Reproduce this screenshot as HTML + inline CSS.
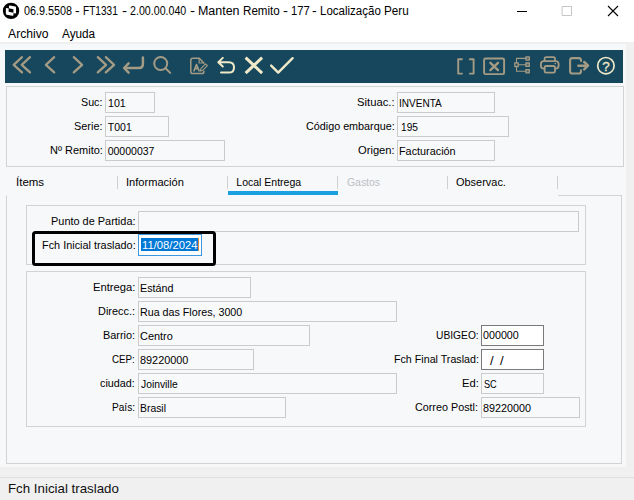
<!DOCTYPE html>
<html lang="es">
<head>
<meta charset="utf-8">
<title>Manten Remito</title>
<style>
html,body{margin:0;padding:0;}
body{width:634px;height:500px;overflow:hidden;position:relative;background:#f7f8fa;font-family:"Liberation Sans",sans-serif;color:#000;}
.abs{position:absolute;box-sizing:border-box;}
.t{position:absolute;white-space:pre;transform-origin:0 0;line-height:20px;height:20px;font-size:10.5px;font-family:"Liberation Sans",sans-serif;}
.f{position:absolute;box-sizing:border-box;border:1px solid #cbcbcb;background:#f8f9fb;height:21px;}
.f.ed{border-color:#7a7a7a;background:#fff;}
.g{position:absolute;box-sizing:border-box;border:1px solid #d2d2d2;}
.sep{position:absolute;width:1px;top:176px;height:13px;background:#d0d0d0;}
</style>
</head>
<body>
<!-- window chrome -->
<div class="abs" style="left:0;top:0;width:634px;height:42px;background:#fff;"></div>
<div class="abs" style="left:0;top:42px;width:634px;height:2px;background:#efefef;"></div>
<div class="abs" style="left:626px;top:42px;width:8px;height:458px;background:#f0f0f0;"></div>
<div class="abs" style="left:0;top:467px;width:634px;height:33px;background:#f0f0f0;"></div>
<div class="abs" style="left:0;top:477px;width:634px;height:1px;background:#dfdfdf;"></div>
<!-- toolbar -->
<div class="abs" style="left:5px;top:50px;width:618px;height:33px;background:#17475c;"></div>
<!-- header panel -->
<div class="g" style="left:6px;top:86px;width:618px;height:81px;"></div>
<div class="f" style="left:105px;top:92px;width:50px;"></div>
<div class="f" style="left:105px;top:116px;width:64px;"></div>
<div class="f" style="left:105px;top:140px;width:120px;"></div>
<div class="f" style="left:397px;top:92px;width:98px;"></div>
<div class="f" style="left:397px;top:116px;width:112px;"></div>
<div class="f" style="left:397px;top:140px;width:98px;"></div>
<!-- tabs -->
<div class="sep" style="left:117px;"></div>
<div class="sep" style="left:227px;"></div>
<div class="sep" style="left:337px;"></div>
<div class="sep" style="left:447px;"></div>
<div class="sep" style="left:557px;"></div>
<div class="abs" style="left:228px;top:191px;width:110px;height:4px;background:#1a9fe0;"></div>
<!-- tab body -->
<div class="abs" style="left:6px;top:195px;width:616px;height:269px;border:1px solid #d2d2d2;border-top-color:transparent;"></div>
<div class="abs" style="left:558px;top:195px;width:64px;height:1px;background:#d2d2d2;"></div>
<div class="g" style="left:26px;top:205px;width:560px;height:60px;"></div>
<div class="g" style="left:26px;top:271px;width:560px;height:156px;"></div>
<div class="f" style="left:138px;top:211px;width:441px;"></div>
<!-- date field (focused) -->
<div class="f" style="left:138px;top:234px;width:64px;height:22px;border-color:#3c96e0;background:#fff;"></div>
<div class="abs" style="left:141px;top:238px;width:57px;height:13px;background:#0078d7;"></div>
<div class="abs" style="left:197.5px;top:238px;width:1px;height:13px;background:#e08a3c;"></div>
<!-- lower fields -->
<div class="f" style="left:138px;top:277px;width:113px;"></div>
<div class="f" style="left:138px;top:301px;width:259px;"></div>
<div class="f" style="left:138px;top:325px;width:172px;"></div>
<div class="f" style="left:138px;top:349px;width:116px;"></div>
<div class="f" style="left:138px;top:373px;width:259px;"></div>
<div class="f" style="left:138px;top:397px;width:148px;"></div>
<div class="f ed" style="left:481px;top:325px;width:63px;"></div>
<div class="f ed" style="left:481px;top:349px;width:63px;"></div>
<div class="f" style="left:481px;top:373px;width:63px;"></div>
<div class="f" style="left:481px;top:397px;width:99px;"></div>
<!-- highlight rectangle -->
<div class="abs" style="left:31.6px;top:231.3px;width:184.1px;height:34.9px;border:3.9px solid #000;border-radius:3.5px;"></div>

<span class="t" style="left:23.95px;top:1px;font-size:12px;transform:scaleX(0.9010);">06.9.5508</span>
<span class="t" style="left:74.92px;top:1px;font-size:12px;transform:scaleX(1.1667);">-</span>
<span class="t" style="left:82.96px;top:1px;font-size:12px;transform:scaleX(0.8403);">FT1331</span>
<span class="t" style="left:122.17px;top:1px;font-size:12px;transform:scaleX(1.2667);">-</span>
<span class="t" style="left:130.16px;top:1px;font-size:12px;transform:scaleX(0.8880);">2.00.00.040</span>
<span class="t" style="left:190.37px;top:1px;font-size:12px;transform:scaleX(1.2667);">-</span>
<span class="t" style="left:198.26px;top:1px;font-size:12px;transform:scaleX(1.0379);">Manten</span>
<span class="t" style="left:242.73px;top:1px;font-size:12px;transform:scaleX(0.9671);">Remito</span>
<span class="t" style="left:283.18px;top:1px;font-size:12px;transform:scaleX(1.2333);">-</span>
<span class="t" style="left:291.06px;top:1px;font-size:12px;transform:scaleX(0.9351);">177</span>
<span class="t" style="left:311.92px;top:1px;font-size:12px;transform:scaleX(1.1667);">-</span>
<span class="t" style="left:319.84px;top:1px;font-size:12px;transform:scaleX(0.9597);">Localização</span>
<span class="t" style="left:384.13px;top:1px;font-size:12px;transform:scaleX(0.9745);">Peru</span>
<span class="t" style="left:7.60px;top:24px;font-size:12px;transform:scaleX(1.0152);">Archivo</span>
<span class="t" style="left:62.30px;top:24px;font-size:12px;transform:scaleX(0.9807);">Ayuda</span>
<span class="t" style="left:7.78px;top:479px;font-size:13px;transform:scaleX(1.0230);color:#111;">Fch Inicial traslado</span>
<span class="t" style="left:81.29px;top:92px;transform:scaleX(1.0205);">Suc:</span>
<span class="t" style="left:74.18px;top:116px;transform:scaleX(1.0385);">Serie:</span>
<span class="t" style="left:49.92px;top:140px;transform:scaleX(1.0462);">Nº Remito:</span>
<span class="t" style="left:357.06px;top:92px;transform:scaleX(1.0726);">Situac.:</span>
<span class="t" style="left:306.09px;top:116px;transform:scaleX(1.0259);">Código embarque:</span>
<span class="t" style="left:358.17px;top:140px;transform:scaleX(1.0636);">Origen:</span>
<span class="t" style="left:108.04px;top:93px;transform:scaleX(1.0154);">101</span>
<span class="t" style="left:107.85px;top:117px;">T001</span>
<span class="t" style="left:107.70px;top:141px;">00000037</span>
<span class="t" style="left:398.94px;top:93px;transform:scaleX(0.9554);">INVENTA</span>
<span class="t" style="left:400.58px;top:117px;transform:scaleX(0.9636);">195</span>
<span class="t" style="left:399.13px;top:141px;transform:scaleX(1.0318);">Facturación</span>
<span class="t" style="left:15.78px;top:172px;transform:scaleX(1.0939);">Ítems</span>
<span class="t" style="left:125.94px;top:172px;transform:scaleX(1.0554);">Información</span>
<span class="t" style="left:236.35px;top:172px;">Local Entrega</span>
<span class="t" style="left:346.60px;top:172px;transform:scaleX(0.9908);color:#bcc0c5;">Gastos</span>
<span class="t" style="left:456.28px;top:172px;transform:scaleX(1.0430);">Observac.</span>
<span class="t" style="left:51.02px;top:211px;transform:scaleX(1.0415);">Punto de Partida:</span>
<span class="t" style="left:41.92px;top:235px;transform:scaleX(1.0355);">Fch Inicial traslado:</span>
<span class="t" style="left:141.50px;top:235px;transform:scaleX(1.0719);color:#fff;">11/08/2024</span>
<span class="t" style="left:92.80px;top:277px;transform:scaleX(1.0684);">Entrega:</span>
<span class="t" style="left:140.03px;top:278px;transform:scaleX(1.0240);">Estánd</span>
<span class="t" style="left:98.02px;top:301px;transform:scaleX(1.0412);">Direcc.:</span>
<span class="t" style="left:140.04px;top:302px;transform:scaleX(1.0186);">Rua das Flores, 3000</span>
<span class="t" style="left:103.02px;top:325px;transform:scaleX(1.0393);">Barrio:</span>
<span class="t" style="left:140.28px;top:326px;transform:scaleX(1.0407);">Centro</span>
<span class="t" style="left:112.33px;top:349px;transform:scaleX(0.9304);">CEP:</span>
<span class="t" style="left:140.28px;top:350px;transform:scaleX(1.0361);">89220000</span>
<span class="t" style="left:100.29px;top:373px;transform:scaleX(1.0277);">ciudad:</span>
<span class="t" style="left:140.55px;top:374px;transform:scaleX(0.9823);">Joinville</span>
<span class="t" style="left:112.08px;top:397px;transform:scaleX(0.9618);">País:</span>
<span class="t" style="left:140.06px;top:398px;transform:scaleX(0.9899);">Brasil</span>
<span class="t" style="left:435.87px;top:325px;transform:scaleX(0.9762);">UBIGEO:</span>
<span class="t" style="left:393.64px;top:349px;transform:scaleX(1.0177);">Fch Final Traslad:</span>
<span class="t" style="left:461.80px;top:373px;transform:scaleX(1.0714);">Ed:</span>
<span class="t" style="left:415.49px;top:397px;transform:scaleX(1.0267);">Correo Postl:</span>
<span class="t" style="left:483.49px;top:325px;transform:scaleX(1.0219);">000000</span>
<span class="t" style="left:490.00px;top:351px;font-size:13px;">/</span>
<span class="t" style="left:500.00px;top:351px;font-size:13px;">/</span>
<span class="t" style="left:483.56px;top:374px;transform:scaleX(0.8727);">SC</span>
<span class="t" style="left:483.49px;top:398px;transform:scaleX(1.0273);">89220000</span>

<!-- icons -->
<svg class="abs" style="left:0;top:0;" width="634" height="500" viewBox="0 0 634 500" fill="none" stroke-linecap="round" stroke-linejoin="round">
  <!-- app logo -->
  <g stroke="none">
    <circle cx="11.05" cy="10.9" r="8.2" fill="#000"/>
    <g transform="translate(11.05 10.9) skewY(11)">
      <rect x="-2.1" y="-5.1" width="7.1" height="6.9" rx="0.9" fill="#fff"/>
      <rect x="-5.2" y="-2.0" width="7.6" height="6.6" rx="0.9" fill="#fff"/>
      <rect x="-2.4" y="-2.1" width="4.8" height="3.4" fill="#000"/>
    </g>
  </g>
  <!-- window controls -->
  <path d="M517 11.5 H527" stroke="#000" stroke-width="1" stroke-linecap="butt"/>
  <rect x="562.5" y="6.5" width="9" height="9" stroke="#c6c6c6" stroke-width="1"/>
  <path d="M608 6 L618 16 M618 6 L608 16" stroke="#000" stroke-width="1.1" stroke-linecap="butt"/>

  <!-- toolbar left icons -->
  <g stroke="#a49b85" stroke-width="2.3">
    <path d="M22 57.2 L13.7 64.8 L22 72.4 M30 57.2 L21.7 64.8 L30 72.4"/>
    <path d="M54.2 57.2 L45.9 64.8 L54.2 72.4"/>
    <path d="M73.8 57.2 L82.1 64.8 L73.8 72.4"/>
    <path d="M97.8 57.2 L106.1 64.8 L97.8 72.4 M105.8 57.2 L114.1 64.8 L105.8 72.4"/>
    <path d="M142.9 57.4 V64.3 Q142.9 68 139.2 68 H125" stroke-width="2.5"/>
    <path d="M128.6 63.4 L124.1 68 L128.6 72.6" stroke-width="2.5"/>
  </g>
  <g stroke="#a49b85" stroke-width="2">
    <circle cx="160.7" cy="63.5" r="6.5"/>
    <path d="M165.6 68.3 L170.2 72.9"/>
  </g>
  <!-- document edit -->
  <g stroke="#a49b85" stroke-width="1.5">
    <path d="M203.9 71.2 V71.8 Q203.9 73.6 202.1 73.6 H192.6 Q190.8 73.6 190.8 71.8 V60 Q190.8 58.2 192.6 58.2 H199.3 L203.9 62.9"/>
    <path d="M199.1 58.6 V63 H203.5" stroke-width="1.2"/>
    <path d="M194 70.8 L196.5 64.6 L199 70.8 M194.9 68.7 H198.1" stroke-width="1.7"/>
    <path d="M200.2 71 L200.9 68.6 L205.6 63.9 L207.4 65.7 L202.7 70.4 Z" stroke-width="1.1"/>
  </g>
  <!-- undo, cancel, ok -->
  <g stroke="#efe9c9">
    <path d="M222.8 57.9 L218.3 62.2 L222.8 66.5 M218.8 62.2 H228.8 Q234 62.2 234 67.4 Q234 72.6 228.8 72.6 H221" stroke-width="2"/>
    <path d="M245.6 57.6 L262.1 73.2 M262.1 57.6 L245.6 73.2" stroke-width="3" stroke-linecap="butt"/>
    <path d="M271.2 65.6 L278.2 72.6 L292.6 58.2" stroke-width="2.4"/>
  </g>
  <!-- right icons -->
  <g stroke="#a49b85" stroke-width="1.9">
    <path d="M462 59.3 H458.2 V73.6 H462 M469.8 59.3 H473.6 V73.6 H469.8"/>
    <rect x="484.1" y="58.5" width="20" height="15.6" rx="1.4"/>
    <path d="M490.4 62.8 L498 70.2 M498 62.8 L490.4 70.2" stroke-width="2.4"/>
  </g>
  <g stroke="#a49b85" stroke-width="1.3">
    <rect x="514.8" y="62.9" width="3.4" height="3.6"/>
    <rect x="525.9" y="56.9" width="3.4" height="3.2" fill="#a49b85" fill-opacity="0.35"/>
    <rect x="525.9" y="63" width="3.4" height="3.4" fill="#a49b85" fill-opacity="0.35"/>
    <rect x="525.9" y="69.6" width="3.4" height="3.2" fill="#a49b85" fill-opacity="0.35"/>
    <path d="M516.5 62.9 V58.4 H525.9 M516.5 66.5 V71.2 H525.9 M518.2 64.7 H525.9" stroke-width="1.1"/>
  </g>
  <!-- printer -->
  <g stroke="#a49b85" stroke-width="1.8">
    <path d="M544.6 61 V58.8 Q544.6 57.2 546.2 57.2 H553.4 Q555 57.2 555 58.8 V61"/>
    <path d="M544.6 68.7 H543.8 Q540.9 68.7 540.9 65.8 V64 Q540.9 61.1 543.8 61.1 H555.7 Q558.6 61.1 558.6 64 V65.8 Q558.6 68.7 555.7 68.7 H555"/>
    <rect x="544.6" y="66" width="10.4" height="6.6" rx="1.6"/>
    <path d="M555.2 63.6 H555.3" stroke-width="1.3" stroke="#c9c2ab"/>
  </g>
  <!-- exit -->
  <g stroke="#a49b85" stroke-width="2.1">
    <path d="M581 61 V60.4 Q581 58.1 578.7 58.1 H572.4 Q570.1 58.1 570.1 60.4 V71.2 Q570.1 73.5 572.4 73.5 H578.7 Q581 73.5 581 71.2 V70.4"/>
    <path d="M578.4 65.7 H587 M584.2 62 L588 65.7 L584.2 69.4" stroke-width="2.5"/>
  </g>
  <!-- help -->
  <circle cx="605.9" cy="65.7" r="8.2" stroke="#efe9c9" stroke-width="1.7"/>
  <text x="605.9" y="70.6" text-anchor="middle" font-family="Liberation Sans, sans-serif" font-size="13.5" fill="#efe9c9" stroke="#efe9c9" stroke-width="0.3">?</text>
</svg>
</body>
</html>
